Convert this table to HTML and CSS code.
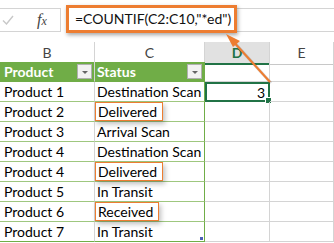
FILE: index.html
```html
<!DOCTYPE html>
<html>
<head>
<meta charset="utf-8">
<link rel="stylesheet" href="styles.css">
</head>
<body>
<div class="page">
  <div class="fbar">
    <div class="fx-area">
      <svg class="check" width="12" height="10" viewBox="0 0 12 10"><path d="M1 5.5 L4.5 9 L11 1" fill="none" stroke="#c8c8c8" stroke-width="1.4"/></svg>
      <span class="fx">f<span class="x">x</span></span>
    </div>
    <div class="input">
      <span class="formula">=COUNTIF(C2:C10,"*ed")</span>
    </div>
  </div>
  <div class="colhead">
    <div class="ch">B</div>
    <div class="ch">C</div>
    <div class="ch sel">D</div>
    <div class="ch">E</div>
  </div>
  <div class="grid">
    <div class="c th">Product<span class="drop"></span></div>
    <div class="c th tc">Status<span class="drop"></span></div>
    <div class="c g"></div><div class="c g"></div>

    <div class="c tb">Product 1</div><div class="c tb tc">Destination Scan</div>
    <div class="c g active">3<span class="handle"></span></div><div class="c g"></div>

    <div class="c tb">Product 2</div><div class="c tb tc"><span class="hl">Delivered</span></div>
    <div class="c g"></div><div class="c g"></div>

    <div class="c tb">Product 3</div><div class="c tb tc">Arrival Scan</div>
    <div class="c g"></div><div class="c g"></div>

    <div class="c tb">Product 4</div><div class="c tb tc">Destination Scan</div>
    <div class="c g"></div><div class="c g"></div>

    <div class="c tb">Product 4</div><div class="c tb tc"><span class="hl">Delivered</span></div>
    <div class="c g"></div><div class="c g"></div>

    <div class="c tb">Product 5</div><div class="c tb tc">In Transit</div>
    <div class="c g"></div><div class="c g"></div>

    <div class="c tb">Product 6</div><div class="c tb tc"><span class="hl">Received</span></div>
    <div class="c g"></div><div class="c g"></div>

    <div class="c tb lastb">Product 7</div><div class="c tb tc lastb">In Transit<span class="resize"></span></div>
    <div class="c g"></div><div class="c g"></div>
  </div>
  <svg class="arrow" width="334" height="243" viewBox="0 0 334 243">
    <line x1="271" y1="83" x2="232" y2="40" stroke="rgba(0,0,0,0.15)" stroke-width="3"/>
    <line x1="270" y1="82" x2="231" y2="39" stroke="#ed7d31" stroke-width="2"/>
    <path d="M226 34 L240 41 L233 47 Z" fill="#ed7d31"/>
  </svg>
</div>
</body>
</html>
```
FILE: styles.css
```css
html, body { margin: 0; padding: 0; background: #fff; }
body { width: 334px; height: 243px; overflow: hidden; font-family: Lato, "Liberation Sans", sans-serif; }
.page { position: relative; width: 334px; height: 243px; }

.fbar { display: flex; height: 42px; align-items: flex-start; }
.fx-area {
  width: 61px; height: 24px; margin-top: 8px;
  border-top: 1px solid #d4d4d4; border-bottom: 1px solid #d4d4d4; border-right: 1px solid #d4d4d4;
  box-sizing: border-box; display: flex; align-items: center; position: relative;
}
.check { margin-left: 2px; }
.fx { margin-left: 23px; font-family: "Liberation Serif", serif; font-style: italic; font-size: 16px; color: #444; }
.fx .x { font-size: 12px; }
.input {
  flex: 1; height: 24px; margin-top: 8px; margin-left: 5px;
  border-top: 1px solid #d4d4d4; border-bottom: 1px solid #d4d4d4;
  box-sizing: border-box; display: flex; align-items: center;
}
.formula {
  display: block; width: 171px; height: 28px; box-sizing: border-box;
  margin-top: -2px;
  border: 3px solid #ed7d31; background: #fff;
  box-shadow: 1px 2px 4px rgba(0,0,0,0.35);
  font-size: 14px; line-height: 21px; padding-left: 6px; color: #111;
  white-space: nowrap;
}

.colhead { display: grid; grid-template-columns: 95px 110px 65px 64px; height: 20px; }
.ch {
  text-align: center; font-size: 14px; line-height: 21px; color: #444;
  border-right: 1px solid #d4d4d4; border-bottom: 1px solid #c8c8c8; box-sizing: border-box;
}
.ch.sel { background: #e1e1e1; color: #217346; font-weight: bold; border-bottom: 2px solid #217346; }

.grid { display: grid; grid-template-columns: 95px 110px 65px 64px; grid-auto-rows: 20px; }
.c {
  box-sizing: border-box; border-bottom: 1px solid #d4d4d4; border-right: 1px solid #d4d4d4;
  font-size: 14px; line-height: 19px; padding-left: 4px; color: #000; white-space: nowrap;
  position: relative;
}
.tb { border-bottom-color: #9fc77f; }
.tc { border-right: 1px solid #70ad47; padding-left: 2px; }
.th { background: #70ad47; color: #fff; font-weight: bold; border-bottom-color: #70ad47; border-right-color: #d4d4d4; }
.th.tc { border-right-color: #70ad47; }
.lastb { border-bottom: 1px solid #70ad47; }
.drop {
  position: absolute; right: 2px; top: 2px; width: 15px; height: 15px; box-sizing: border-box;
  background: #f2f2f2; border: 1px solid #b0b0b0;
}
.drop::after {
  content: ""; position: absolute; left: 4px; top: 6px;
  border-left: 3px solid transparent; border-right: 3px solid transparent; border-top: 3px solid #666;
}
.hl {
  display: inline-block; height: 19px; box-sizing: border-box; margin-left: -2px; padding: 0 5px 0 2px;
  border: 1px solid #ed7d31; line-height: 17px; background: #fff;
  box-shadow: 2px 3px 5px rgba(0,0,0,0.25);
}
.active { border: 2px solid #217346; text-align: right; padding-right: 3px; line-height: 17px; }
.handle { position: absolute; right: -4px; bottom: -4px; width: 5px; height: 5px; background: #217346; border: 1px solid #fff; }
.resize { position: absolute; right: 1px; bottom: 1px; width: 3px; height: 3px; background: #4a5fb5; }
.arrow { position: absolute; left: 0; top: 0; pointer-events: none; }
```
